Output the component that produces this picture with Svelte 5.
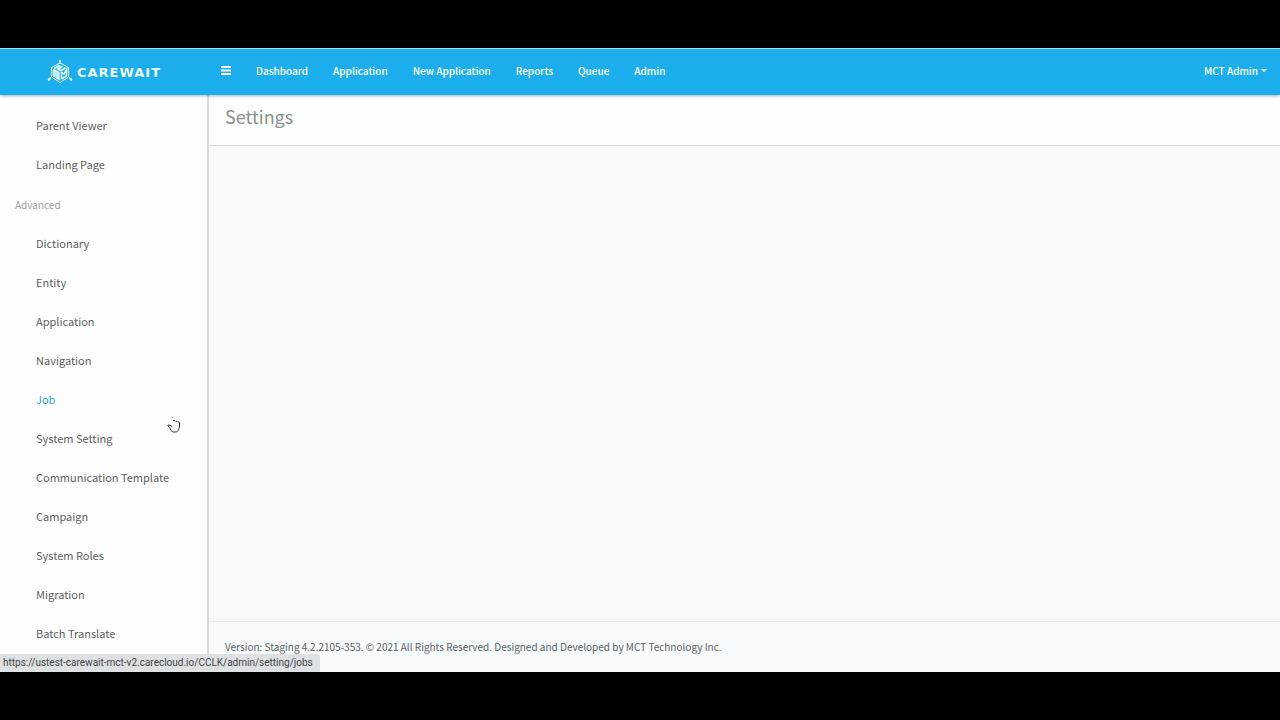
<script lang="ts">

    type MenuItem = {
        label: string;
        slug: string;
    };

    const navLinks = ['Dashboard', 'Application', 'New Application', 'Reports', 'Queue', 'Admin'];

    const pageItems: MenuItem[] = [
        { label: 'Parent Viewer', slug: 'parent-viewer' },
        { label: 'Landing Page', slug: 'landing-page' }
    ];

    const advancedItems: MenuItem[] = [
        { label: 'Dictionary', slug: 'dictionary' },
        { label: 'Entity', slug: 'entity' },
        { label: 'Application', slug: 'application' },
        { label: 'Navigation', slug: 'navigation' },
        { label: 'Job', slug: 'jobs' },
        { label: 'System Setting', slug: 'system-setting' },
        { label: 'Communication Template', slug: 'communication-template' },
        { label: 'Campaign', slug: 'campaign' },
        { label: 'System Roles', slug: 'system-roles' },
        { label: 'Migration', slug: 'migration' },
        { label: 'Batch Translate', slug: 'batch-translate' }
    ];

    const baseUrl = 'https://ustest-carewait-mct-v2.carecloud.io/CCLK/admin/setting/';

    let active = $state('jobs');
    let sidebarOpen = $state(true);

</script>

{#snippet menu(items: MenuItem[])}
    <ul>
        {#each items as item}
            <li>
                <a
                    href="#{item.slug}"
                    class:active={active === item.slug}
                    onmouseenter={() => active = item.slug}
                >{item.label}</a>
            </li>
        {/each}
    </ul>
{/snippet}

<div class="screen">
    <div class="app">

        <header class="topbar">
            <a class="brand" href="#home">
                <svg class="logo" viewBox="0 0 26 26" width="26" height="26" fill="none" stroke="#e9fbff" aria-hidden="true">
                    <path d="M13 4 L21.500 8.500 V18 L13 23.500 L4.500 18 V8.500 Z" stroke-width="1" />
                    <path d="M13 2 V4 M4 18.500 L2 20 M22 18.500 L24 20" stroke-width="1.200" />
                    <circle cx="13" cy="2" r="1" fill="#e9fbff" stroke="none" />
                    <circle cx="2" cy="20.500" r="1.200" fill="#e9fbff" stroke="none" />
                    <circle cx="24" cy="20.500" r="1.200" fill="#e9fbff" stroke="none" />
                    <path d="M6.500 10.500 L12 13.500 V20.500 L6.500 17 Z" fill="#b9ebfc" stroke-width="1.300" />
                    <path d="M7 9.500 L12 6.800 L14.500 7.800 L11 10 L14 11.500 L18.500 8.800" stroke-width="1.600" />
                    <path d="M14.500 20 V13.500 L17 15 L19.500 10.500 V17 L14.500 20" stroke-width="1.500" />
                </svg>
                <span>CAREWAIT</span>
            </a>

            <div class="tools">
                <button class="burger" aria-label="Toggle menu" onclick={() => sidebarOpen = !sidebarOpen}>
                    <svg viewBox="0 0 10 9" width="10" height="9" fill="#fff">
                        <rect width="10" height="2" />
                        <rect y="3.500" width="10" height="2" />
                        <rect y="7" width="10" height="2" />
                    </svg>
                </button>

                <nav>
                    {#each navLinks as link}
                        <a href="#{link.toLowerCase().replace(' ', '-')}">{link}</a>
                    {/each}
                </nav>

                <button class="user">MCT Admin<span class="caret"></span></button>
            </div>
        </header>

        <div class="body">

            {#if sidebarOpen}
                <aside>
                    {@render menu(pageItems)}
                    <h2>Advanced</h2>
                    {@render menu(advancedItems)}
                </aside>
            {/if}

            <main>
                <div class="page-head">
                    <h1>Settings</h1>
                </div>
                <div class="content"></div>
                <footer>
                    Version: Staging 4.2.2105-353. © 2021 All Rights Reserved. Designed and Developed by MCT Technology Inc.
                </footer>
            </main>

        </div>

        <div class="status">{baseUrl}{active}</div>

        <svg class="pointer" viewBox="0 0 14 17" width="14" height="17" fill="none" stroke="#222" aria-hidden="true">
            <path d="M4.500 0.500 L6 0.800" stroke="#999" stroke-width="0.800" />
            <path d="M6 3.500 L8 3.800 M8.500 4.200 L10.500 4.300 M11 4.700 L12.500 5.500 V10" stroke-width="1" />
            <path d="M5 10 L4 8.500 L1 8 V9 L3 11 L4 13.500 L6 15 H9.500 L11 13.500 L12.500 10" stroke-width="0.900" />
        </svg>

    </div>
</div>

<style>

/* PAGE */
:global(body) {
    margin: 0;
    background: #000;
}

.screen {
    box-sizing: border-box;
    min-height: 100vh;
    padding: 48px 0;
    display: flex;
    font-family: "Noto Sans CJK SC", "Open Sans", sans-serif;
    font-size: 11px;
    line-height: 15px;
    color: #5c5f61;
}

.app {
    position: relative;
    flex: 1;
    display: flex;
    flex-direction: column;
    background: #f6fafd;
}

a {
    color: inherit;
    text-decoration: none;
}

button {
    padding: 0;
    border: none;
    background: none;
    color: inherit;
    font: inherit;
    cursor: pointer;
}

/* TOP BAR */
.topbar {
    z-index: 1;
    display: flex;
    align-items: center;
    height: 46px;
    border-top: 1px solid #a5e3fa;
    background: #1badec;
    color: #fff;
    font-size: 10px;
    font-weight: 500;
    box-shadow: 0 1px 3px rgba(0, 0, 0, 0.3);
}

.brand {
    display: flex;
    align-items: center;
    gap: 4px;
    width: 174px;
    padding-left: 47px;
    color: #e9fbff;
    font-family: "DejaVu Sans", sans-serif;
    font-size: 13px;
    font-weight: bold;
    letter-spacing: 1px;
}

.tools {
    flex: 1;
    display: flex;
    align-items: center;
    padding-bottom: 3px;
}

.burger {
    display: flex;
    width: 10px;
}

nav {
    flex: 1;
    display: flex;
    gap: 25px;
    padding-left: 25px;
}

.user {
    display: flex;
    align-items: center;
    gap: 3px;
    margin-right: 13px;
}

.caret {
    border: 3px solid transparent;
    border-top-color: #fff;
    border-bottom: none;
}

/* SIDEBAR */
.body {
    flex: 1;
    display: flex;
}

aside {
    width: 207px;
    padding: 11px 0 18px;
    border-right: 2px solid #d9dbdc;
    background: #fefefe;
}

ul {
    margin: 0;
    padding: 0;
    list-style: none;
}

li a {
    display: block;
    padding: 12px 0 12px 36px;
}

li a.active {
    color: #2ba6d8;
}

aside h2 {
    margin: 0;
    padding: 13px 0 12px 15px;
    color: #9a9fa3;
    font-size: 10px;
    font-weight: normal;
}

/* MAIN */
main {
    flex: 1;
    display: flex;
    flex-direction: column;
}

.page-head {
    padding: 7px 16px 15px;
    border-bottom: 1px solid #d3d8dc;
    background: #fbfffe;
}

h1 {
    margin: 0;
    color: #8e8e8e;
    font-size: 18px;
    font-weight: normal;
    line-height: 28px;
}

.content {
    flex: 1;
}

footer {
    padding: 17px 16px 18px;
    border-top: 1px solid #e6ebee;
    font-size: 10px;
}

/* OVERLAYS */
.status {
    position: absolute;
    left: 0;
    bottom: 0;
    z-index: 2;
    padding: 1px 7px 2px 3px;
    border-top-right-radius: 3px;
    background: #dee1e3;
    color: #3f4448;
    font-family: Roboto, sans-serif;
    font-size: 10px;
}

.pointer {
    position: absolute;
    left: 167px;
    top: 369px;
    z-index: 2;
}

</style>
